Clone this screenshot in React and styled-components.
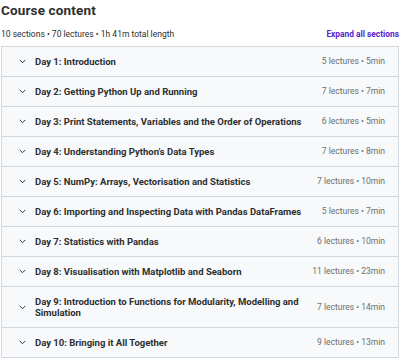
import React from "react";
import styled, { createGlobalStyle } from "styled-components";

const Global = createGlobalStyle`
  html, body { margin: 0; padding: 0; background: #fff; }
  body { font-family: Roboto, "Liberation Sans", Arial, sans-serif; color: #2d2f31; }
`;

const Page = styled.div`
  width: 400px;
  padding: 0 1px;
  box-sizing: border-box;
`;

const Title = styled.h2`
  margin: 0;
  padding-top: 2px;
  font-size: 13.5px;
  line-height: 17px;
  font-weight: 700;
  letter-spacing: 0.15px;
`;

const MetaBar = styled.div`
  display: flex;
  justify-content: space-between;
  align-items: center;
  margin-top: 7px;
  height: 16px;
  margin-bottom: 4px;
`;

const Summary = styled.span`
  font-size: 8.5px;
  color: #2d2f31;
`;

const ExpandLink = styled.button`
  border: 0;
  background: none;
  padding: 0;
  font-family: inherit;
  font-size: 8.4px;
  font-weight: 700;
  color: #5624d0;
  cursor: pointer;
`;

const List = styled.div`
  border: 1px solid #d1d7dc;
  border-bottom: 0;
`;

const Row = styled.div`
  display: flex;
  align-items: center;
  background: #f7f9fa;
  border-bottom: 1px solid #d1d7dc;
  padding: 9px 13px 9px 17px;
  min-height: 11px;
`;

const Chevron = styled.svg`
  flex: none;
  width: 7px;
  height: 7px;
  margin-right: 9px;
  color: #2d2f31;
`;

const SectionTitle = styled.span`
  flex: 1;
  font-size: 9.5px;
  line-height: 11px;
  font-weight: 700;
  padding-right: 14px;
`;

const SectionMeta = styled.span`
  flex: none;
  font-size: 8.5px;
  line-height: 11px;
  color: #6a6f73;
`;

const sections = [
  ["Day 1: Introduction", "5 lectures • 5min"],
  ["Day 2: Getting Python Up and Running", "7 lectures • 7min"],
  ["Day 3: Print Statements, Variables and the Order of Operations", "6 lectures • 5min"],
  ["Day 4: Understanding Python's Data Types", "7 lectures • 8min"],
  ["Day 5: NumPy: Arrays, Vectorisation and Statistics", "7 lectures • 10min"],
  ["Day 6: Importing and Inspecting Data with Pandas DataFrames", "5 lectures • 7min"],
  ["Day 7: Statistics with Pandas", "6 lectures • 10min"],
  ["Day 8: Visualisation with Matplotlib and Seaborn", "11 lectures • 23min"],
  ["Day 9: Introduction to Functions for Modularity, Modelling and Simulation", "7 lectures • 14min"],
  ["Day 10: Bringing it All Together", "9 lectures • 13min"],
];

export default function App() {
  return (
    <Page>
      <Global />
      <Title>Course content</Title>
      <MetaBar>
        <Summary>10 sections • 70 lectures • 1h 41m total length</Summary>
        <ExpandLink>Expand all sections</ExpandLink>
      </MetaBar>
      <List>
        {sections.map(([t, m]) => (
          <Row key={t}>
            <Chevron viewBox="0 0 7 7" fill="none">
              <path d="M1 2.2 L3.5 4.7 L6 2.2" stroke="currentColor" strokeWidth="1" strokeLinecap="round" strokeLinejoin="round" />
            </Chevron>
            <SectionTitle>{t}</SectionTitle>
            <SectionMeta>{m}</SectionMeta>
          </Row>
        ))}
      </List>
    </Page>
  );
}
